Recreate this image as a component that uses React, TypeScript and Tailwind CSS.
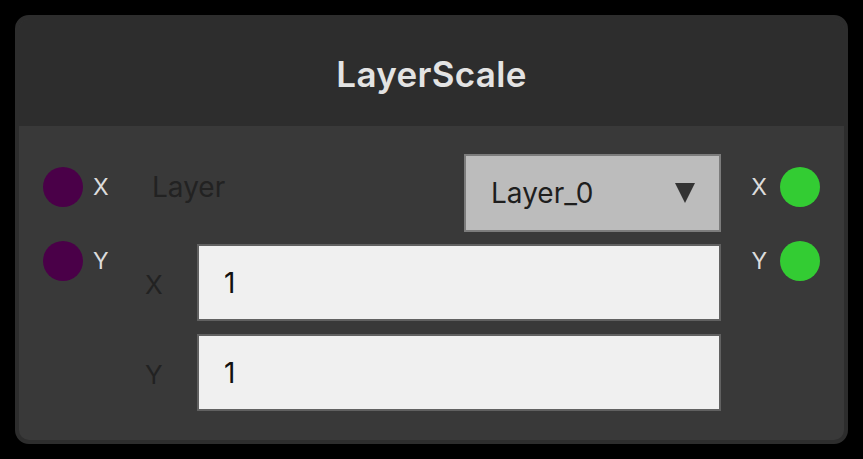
export default function App() {
  const font = { fontFamily: 'Inter, "Noto Sans", sans-serif' };
  return (
    <div className="w-[863px] h-[459px] bg-black p-[15px]" style={font}>
      <div className="w-[833px] h-[429px] rounded-[14px] border-4 border-[#2d2d2d] bg-[#393939] flex flex-col overflow-hidden">
        <div className="h-[107px] shrink-0 bg-[#2d2d2d] flex items-center justify-center">
          <span className="text-[35px] leading-none font-semibold tracking-[0.3px] text-[#e3e3e3] pt-[3px]">LayerScale</span>
        </div>
        <div className="flex-1 flex">
          {/* inputs */}
          <div className="pl-6 pt-[41px] flex flex-col gap-[34px] w-[126px]">
            <div className="flex items-center gap-[10px]">
              <div className="w-10 h-10 rounded-full bg-[#4a0048]" />
              <span className="text-[23px] leading-none text-[#dcdcdc]">X</span>
            </div>
            <div className="flex items-center gap-[10px]">
              <div className="w-10 h-10 rounded-full bg-[#4a0048]" />
              <span className="text-[23px] leading-none text-[#dcdcdc]">Y</span>
            </div>
          </div>

          <div className="w-[576px] pt-7 flex flex-col">
            <div className="flex justify-between items-start">
              <span className="pl-[7px] mt-[19px] text-[28px] leading-none text-[#222222]">Layer</span>
              <div className="w-[257px] h-[78px] bg-[#bcbcbc] border-2 border-[#7c7c7c] flex items-center justify-between pl-[25px] pr-[24px]">
                <span className="text-[28px] leading-none text-[#1e1e1e]">Layer_0</span>
                <svg width="20" height="20" viewBox="0 0 20 20">
                  <polygon points="0,0 20,0 10,20" fill="#333333" />
                </svg>
              </div>
            </div>
            <div className="flex items-center mt-3">
              <span className="w-[52px] mt-[5px] text-[26px] leading-none text-[#222222]">X</span>
              <div className="flex-1 h-[77px] bg-[#f0f0f0] border-2 border-[#616161] flex items-center pl-[25px]">
                <span className="text-[28px] leading-none text-[#111111]">1</span>
              </div>
            </div>
            <div className="flex items-center mt-[13px]">
              <span className="w-[52px] mt-[5px] text-[26px] leading-none text-[#222222]">Y</span>
              <div className="flex-1 h-[77px] bg-[#f0f0f0] border-2 border-[#616161] flex items-center pl-[25px]">
                <span className="text-[28px] leading-none text-[#111111]">1</span>
              </div>
            </div>
          </div>

          {/* outputs */}
          <div className="flex-1 pr-6 pt-[41px] flex flex-col items-end gap-[34px]">
            <div className="flex items-center gap-[13px]">
              <span className="text-[23px] leading-none text-[#dcdcdc]">X</span>
              <div className="w-10 h-10 rounded-full bg-[#33cc33]" />
            </div>
            <div className="flex items-center gap-[13px]">
              <span className="text-[23px] leading-none text-[#dcdcdc]">Y</span>
              <div className="w-10 h-10 rounded-full bg-[#33cc33]" />
            </div>
          </div>
        </div>
      </div>
    </div>
  );
}
